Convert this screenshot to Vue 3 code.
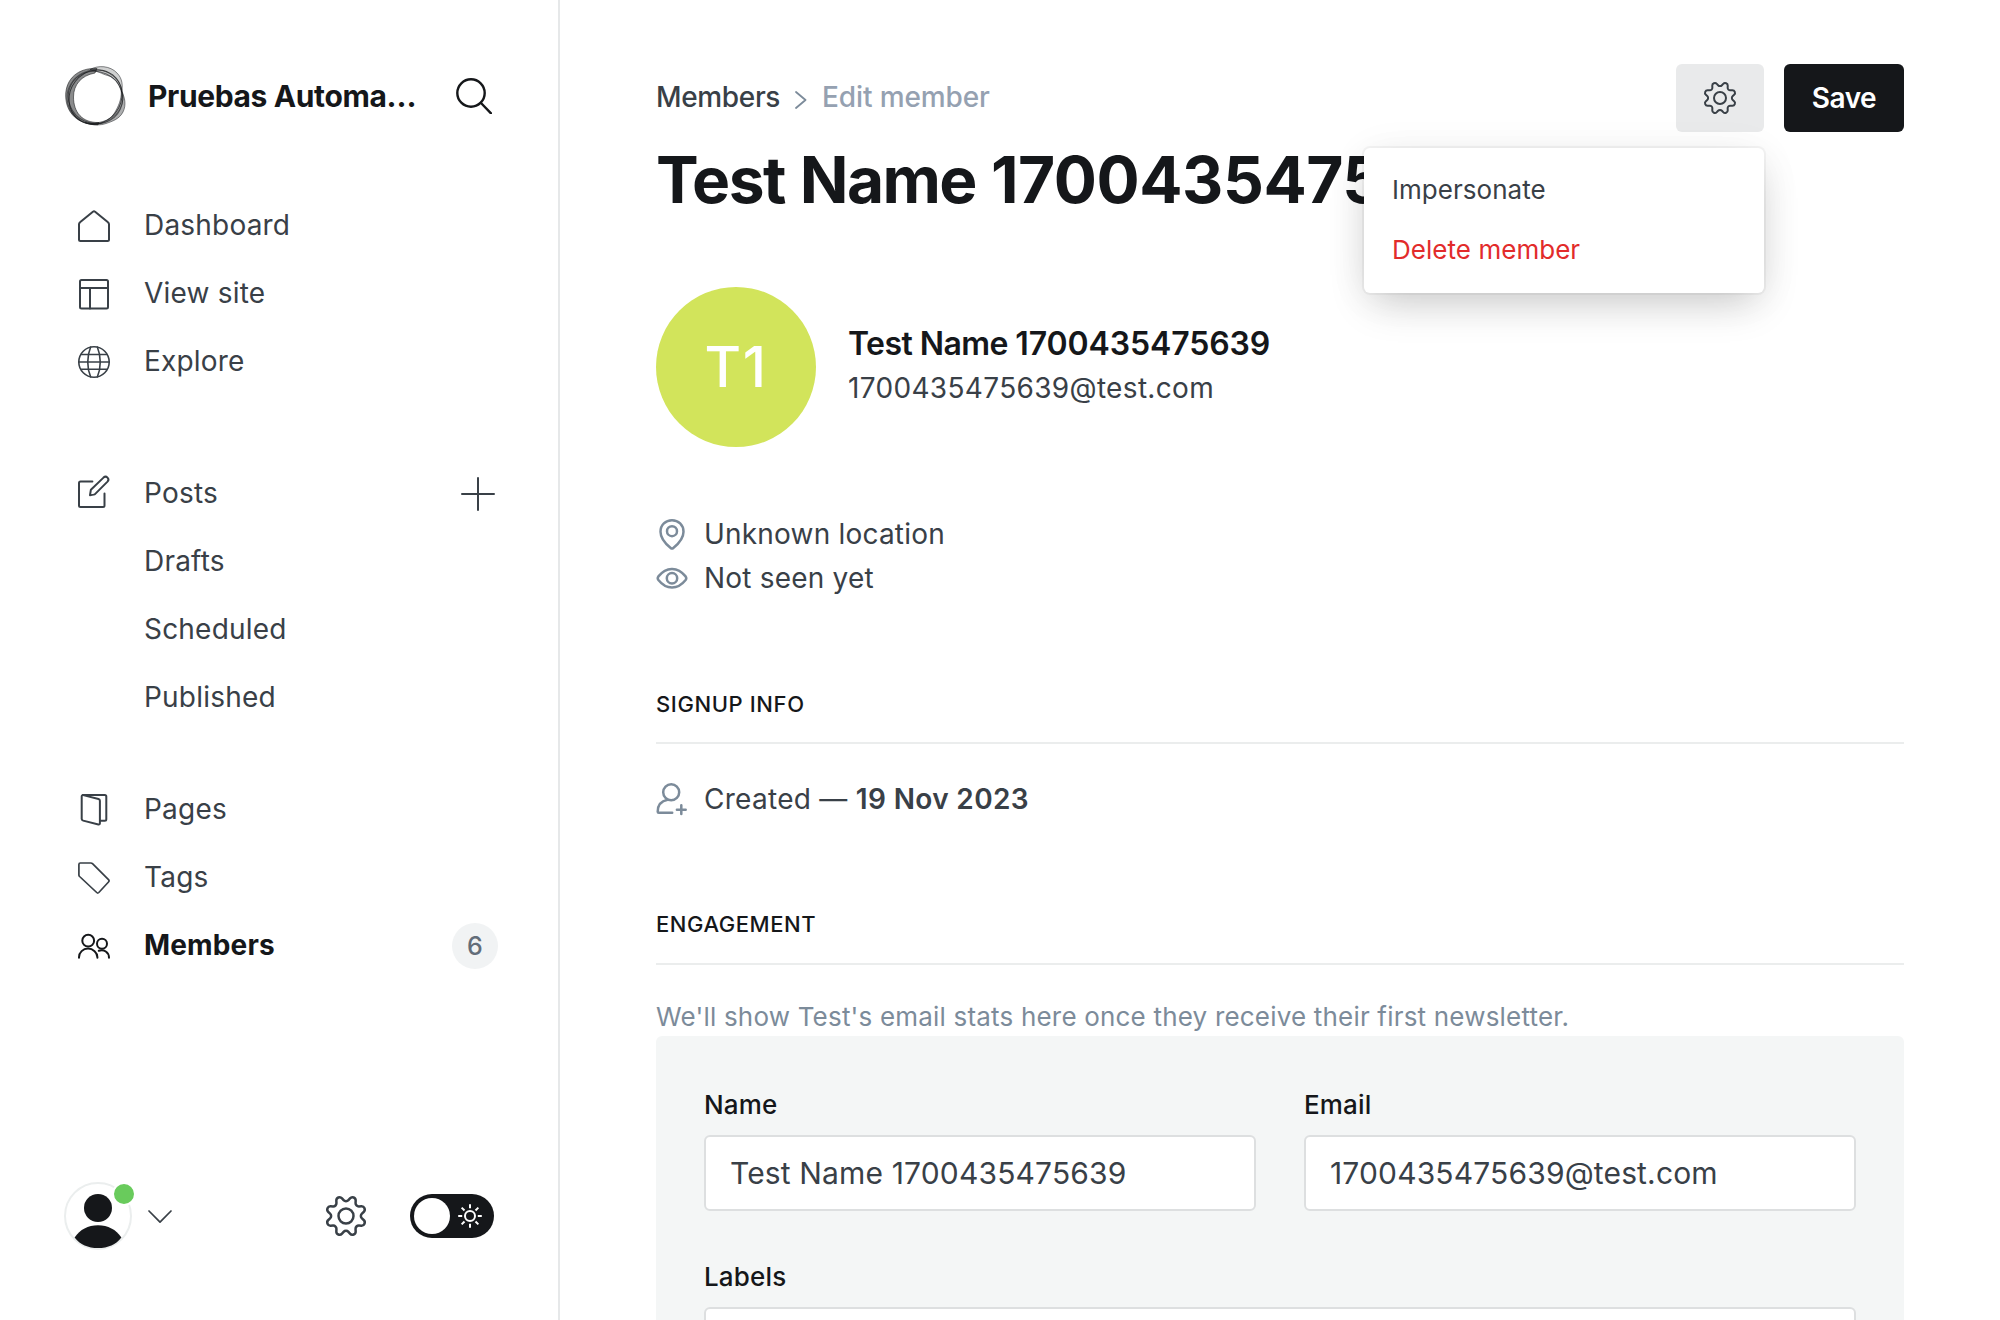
<script setup>
import { ref } from 'vue'

const primary = [
  { label: 'Dashboard', icon: 'house' },
  { label: 'View site', icon: 'layout' },
  { label: 'Explore', icon: 'globe' },
]
const postViews = ['Drafts', 'Scheduled', 'Published']
const name = ref('Test Name 1700435475639')
const email = ref('1700435475639@test.com')
const cog =
  'M10.546 2.438a1.957 1.957 0 0 0 2.908 0L14.4 1.4a1.959 1.959 0 0 1 3.41 1.413l-.071 1.4a1.958 1.958 0 0 0 2.051 2.054l1.4-.071a1.959 1.959 0 0 1 1.41 3.41l-1.042.94a1.96 1.96 0 0 0 0 2.909l1.042.94a1.959 1.959 0 0 1-1.413 3.41l-1.4-.071a1.958 1.958 0 0 0-2.056 2.056l.071 1.4A1.959 1.959 0 0 1 14.4 22.6l-.941-1.041a1.959 1.959 0 0 0-2.908 0L9.606 22.6A1.959 1.959 0 0 1 6.2 21.192l.072-1.4a1.958 1.958 0 0 0-2.056-2.056l-1.4.071A1.958 1.958 0 0 1 1.4 14.4l1.041-.94a1.96 1.96 0 0 0 0-2.909L1.4 9.606A1.958 1.958 0 0 1 2.813 6.2l1.4.071a1.958 1.958 0 0 0 2.056-2.06L6.2 2.81a1.959 1.959 0 0 1 3.406-1.41Z'
const rays = [0, 45, 90, 135, 180, 225, 270, 315]
</script>

<template>
  <div class="app">
    <aside class="sidebar">
      <div class="brand">
        <svg class="logo" viewBox="0 0 64 64" fill="#15171a" stroke="#15171a" stroke-width=".7">
          <path fill-opacity=".5" stroke-opacity=".8" d="M33 4.500C14 3.500 1.500 15 1.700 32 2 49 14 61 34 60.800L35 58.500C18 59 9.500 48 9.500 33 9.500 21 17 11.500 31 9Z" />
          <path fill-opacity=".2" stroke-opacity=".7" d="M26 5.500C34 1 46 1.500 53 9 58.500 14.500 59 22 57.500 28 54.500 18 50 13 43.500 11.500 38 10 34 7 26 5.500Z" />
          <path fill-opacity=".35" stroke-opacity=".7" d="M57.300 27C61 33 62.500 41 59 48 55.500 55 48 57.500 42 59.500 37 61.500 27 61.500 21 58.500 34 60.500 46 57 50.500 49 54.500 42 57.500 36 57.300 27Z" />
          <g fill="none" stroke-width="1">
            <ellipse cx="31.500" cy="33" rx="25.500" ry="28" transform="rotate(38 31.500 33)" stroke-opacity=".75" />
            <ellipse cx="31.500" cy="33.500" rx="26" ry="27.500" transform="rotate(115 31.500 33.500)" stroke-opacity=".6" />
            <ellipse cx="31" cy="33" rx="27" ry="28" transform="rotate(75 31 33)" stroke-opacity=".5" />
          </g>
        </svg>
        <span class="site-name">Pruebas Automa…</span>
        <svg class="search" viewBox="0 0 36 36" fill="none" stroke="#15171a" stroke-width="2.400" stroke-linecap="round">
          <circle cx="15" cy="15" r="13.700" /><path d="m25 25 10 10.400" />
        </svg>
      </div>

      <nav class="nav">
        <ul>
          <li v-for="item in primary" :key="item.label">
            <svg class="icon" viewBox="0 0 32 32">
              <path v-if="item.icon === 'house'" d="M1 14.200c0-.9.4-1.500 1-1.900L14.900 1.700c.7-.5 1.500-.5 2.200 0L30 12.300c.6.400 1 1 1 1.900V29.500c0 .8-.7 1.500-1.500 1.500h-27C1.700 31 1 30.300 1 29.500Z" />
              <g v-else-if="item.icon === 'layout'"><rect x="2" y="2" width="28" height="28.500" rx="1.500" /><path d="M2 10h28M12 10v20.500" /></g>
              <g v-else stroke-width="1.600"><circle cx="16" cy="16" r="15.200" /><path d="M12.600 1.200C8.800 10 8.800 22 12.600 30.800M19.400 1.200c3.800 8.800 3.800 20.800 0 29.600M3 8.500h26M.8 16h30.400M3 23.300h26" /></g>
            </svg>
            <span>{{ item.label }}</span>
          </li>
        </ul>
        <ul class="posts">
          <li>
            <svg class="icon" viewBox="0 0 32 32">
              <path d="M14.400 5.500H2.500C1.700 5.500 1 6.200 1 7v22.500c0 .8.700 1.500 1.500 1.500H25c.8 0 1.500-.700 1.500-1.500V17.500" />
              <path d="m12 19.200.9-5.500L25.500 1.600c1.200-1.100 2.900-1.100 4 0s1.100 2.800 0 4L17 18.100c-.6.600-5 1.100-5 1.100Z" />
            </svg>
            <span>Posts</span>
            <svg class="plus" viewBox="0 0 34 34"><path d="M1 17h32M17 1v32" /></svg>
          </li>
          <li v-for="view in postViews" :key="view"><span class="sub">{{ view }}</span></li>
        </ul>
        <ul>
          <li>
            <svg class="icon" viewBox="0 0 32 32">
              <path d="M5.200 1.100 20.500 5c.9.300 1.400.800 1.400 1.700v22.500c0 1-.6 1.500-1.500 1.300L5.200 26.600C4.300 26.300 3.700 25.800 3.700 25V2.500c0-1 .6-1.600 1.500-1.400Z" />
              <path d="M5 1.100h21.800c.9 0 1.500.6 1.500 1.500v22.600c0 .9-.6 1.500-1.500 1.500h-4.600" />
            </svg>
            <span>Pages</span>
          </li>
          <li>
            <svg class="icon" viewBox="0 0 32 32"><path stroke-width="1.700" d="M2.300 1h10.500c.7 0 1.200.2 1.700.7l16 16c.8.800.8 1.500 0 2.300L20.800 30.500c-.7.700-1.400.700-2.100 0L1.600 14.500C1.100 14 .9 13.500.9 12.900V2.400C.9 1.500 1.400 1 2.300 1Z" /></svg>
            <span>Tags</span>
          </li>
          <li class="active">
            <svg class="icon" viewBox="0 0 32 32">
              <circle cx="10.200" cy="10.700" r="5.900" /><circle cx="24" cy="13.800" r="5" />
              <path d="M1 27.700v-.5C1 22.500 5 18.600 10 18.600s9.400 3.900 9.400 8.600v.5M20.800 20.800c5-2 10.200 1.500 10.200 6.900" />
            </svg>
            <span>Members</span>
            <b class="count">6</b>
          </li>
        </ul>
      </nav>

      <div class="footer">
        <div class="user">
          <svg viewBox="0 0 68 68">
            <circle cx="34" cy="34" r="33" fill="#fff" stroke="#ebeeee" stroke-width="2" />
            <circle cx="34" cy="26" r="14" fill="#15171a" />
            <path d="M10.600 55.400C16 47.500 24 43.200 34 43.200s18 4.300 23.400 12.200C52 62.500 44 66 34 66s-18-3.500-23.400-10.600Z" fill="#15171a" />
          </svg>
          <i class="status"></i>
        </div>
        <svg class="caret" viewBox="0 0 24 14"><path d="m1 1 11 11.200L23 1" /></svg>
        <svg class="settings" viewBox="0 0 24 24"><path :d="cog" /><circle cx="12" cy="12" r="4.500" /></svg>
        <div class="toggle">
          <span class="knob"></span>
          <svg viewBox="-12 -12 24 24" fill="none" stroke="#fff" stroke-width="2">
            <circle r="5" />
            <path v-for="a in rays" :key="a" d="M0-7.800V-11.800" :transform="`rotate(${a})`" />
          </svg>
        </div>
      </div>
    </aside>

    <main class="main">
      <header class="header">
        <div class="crumbs">
          <span class="parent">Members</span>
          <svg viewBox="0 0 12 18"><path d="m1 1 9.500 8L1 17" /></svg>
          <span class="current">Edit member</span>
        </div>
        <div class="actions">
          <div class="menu-anchor">
            <button class="cog-btn"><svg viewBox="0 0 24 24"><path :d="cog" /><circle cx="12" cy="12" r="4.500" /></svg></button>
            <div class="menu">
              <div class="menu-item">Impersonate</div>
              <div class="menu-item danger">Delete member</div>
            </div>
          </div>
          <button class="save">Save</button>
        </div>
      </header>
      <h1>Test Name <span class="digits">1700435475639</span></h1>

      <section class="profile">
        <div class="avatar">T1</div>
        <div class="identity">
          <h2>Test Name <span class="digits">1700435475639</span></h2>
          <p>{{ email }}</p>
        </div>
      </section>

      <section class="meta">
        <div class="row">
          <svg viewBox="0 0 32 32"><path d="M16 2.200c6.400 0 11.500 4.800 11.500 11.500C27.500 20.500 21 27 17.300 30c-.8.700-1.800.7-2.600 0C11 27 4.500 20.500 4.500 13.700 4.500 7 9.600 2.200 16 2.200Z" /><circle cx="16" cy="13.200" r="5" /></svg>
          <span>Unknown location</span>
        </div>
        <div class="row">
          <svg viewBox="0 0 32 32"><path d="M16 6.900c5.700-.1 10.500 3.600 13.600 7.500.9 1.200.9 2.400 0 3.600-3.100 3.900-7.900 7.500-13.600 7.500S5.500 21.900 2.400 18c-.9-1.200-.9-2.400 0-3.600C5.500 10.500 10.300 6.800 16 6.900Z" /><circle cx="16" cy="16.200" r="5.200" /></svg>
          <span>Not seen yet</span>
        </div>
      </section>

      <h4 class="signup">Signup info</h4>
      <div class="row created">
        <svg viewBox="0 0 32 32"><circle cx="15.200" cy="9.300" r="8" /><path d="M11.600 16.800C5.500 18 1.700 22.400 1.700 28.700c0 .7.400 1.100 1.100 1.100h13.400M25.300 22.300v8.800M20.900 26.700h8.800" /></svg>
        <span>Created — <b>19 Nov 2023</b></span>
      </div>

      <h4 class="engagement">Engagement</h4>
      <p class="hint">We'll show Test's email stats here once they receive their first newsletter.</p>

      <form class="panel">
        <div class="field"><label>Name</label><div class="input">{{ name }}</div></div>
        <div class="field"><label>Email</label><div class="input">{{ email }}</div></div>
        <div class="field wide"><label>Labels</label><div class="input"></div></div>
      </form>
    </main>
  </div>
</template>

<style>
body { overflow: hidden; }
</style>

<style scoped>
* { box-sizing: border-box; margin: 0; padding: 0; }
.app { display: flex; height: 1320px; overflow: hidden; background: #fff; color: #394047; font: 400 28px/36px Inter, sans-serif; letter-spacing: .2px; }
.sidebar { display: flex; flex-direction: column; flex: none; width: 560px; padding: 64px 62px 70px 64px; border-right: 2px solid #e6e8e9; }
.brand { display: flex; align-items: center; height: 64px; }
.logo { width: 64px; height: 64px; }
.site-name { flex: none; margin-left: 20px; font-size: 30px; font-weight: 700; letter-spacing: -.37px; color: #15171a; width: 308px; }
.search { flex: none; width: 36px; height: 36px; }
.nav { margin-top: 63px; display: flex; flex-direction: column; }
ul { list-style: none; margin-bottom: 44px; }
ul:first-child { margin-bottom: 64px; }
li { display: flex; align-items: center; height: 68px; padding-left: 14px; }
li span { margin-left: 34px; }
li .sub { margin-left: 66px; }
.icon { width: 32px; height: 32px; margin-top: 1px; fill: none; stroke: #394047; stroke-width: 2; stroke-linecap: round; stroke-linejoin: round; overflow: visible; }
.posts .icon { margin-top: -3px; }
.plus { width: 34px; height: 34px; margin: 1px 1px 0 auto; fill: none; stroke: #394047; stroke-width: 2; stroke-linecap: round; }
.active { color: #15171a; font-weight: 700; letter-spacing: .16px; }
.active .icon { stroke: #15171a; }
.count { display: flex; align-items: center; justify-content: center; width: 46px; height: 46px; margin: 1px -2px 0 auto; border-radius: 50%; background: #f1f3f4; color: #626d79; font-size: 25px; font-weight: 500; }
.footer { display: flex; align-items: center; height: 68px; margin-top: auto; }
.user { position: relative; width: 68px; height: 68px; }
.user svg { display: block; width: 68px; height: 68px; }
.status { position: absolute; top: 0; right: -4px; width: 24px; height: 24px; border: 2px solid #fff; border-radius: 50%; background: #69cb5c; }
.caret { width: 24px; height: 14px; margin: 2px 0 0 16px; fill: none; stroke: #394047; stroke-width: 1.700; stroke-linecap: round; stroke-linejoin: round; }
.settings { width: 40px; height: 40px; margin-left: 154px; fill: none; stroke: #394047; stroke-width: 1.500; overflow: visible; }
.toggle { display: flex; align-items: center; width: 84px; height: 44px; margin-left: 44px; padding-left: 4px; border-radius: 22px; background: #15171a; }
.knob { width: 36px; height: 36px; border-radius: 50%; background: #fff; }
.toggle svg { width: 24px; height: 24px; margin-left: 8px; }

.main { flex: 1; padding: 64px 96px 0; }
.header { display: flex; align-items: center; justify-content: space-between; height: 68px; }
.crumbs { display: flex; align-items: center; margin-top: -2px; font-weight: 500; letter-spacing: -.35px; }
.crumbs svg { width: 12px; height: 18px; margin: 5px 15px 0 15px; fill: none; stroke: #7c8b9a; stroke-width: 1.800; stroke-linecap: round; stroke-linejoin: round; }
.current { color: #95a1b1; letter-spacing: -.12px; }
.actions { display: flex; gap: 20px; }
button { display: flex; align-items: center; justify-content: center; height: 68px; border: 0; border-radius: 6px; font: inherit; }
.cog-btn { width: 88px; background: #e9eaeb; }
.cog-btn svg { width: 32px; height: 32px; fill: none; stroke: #394047; stroke-width: 1.500; overflow: visible; }
.save { width: 120px; background: #15171a; color: #fff; font-weight: 600; letter-spacing: -.5px; }
.menu-anchor { position: relative; }
.menu { position: absolute; top: 84px; right: 0; z-index: 2; width: 400px; height: 145px; padding: 12px 0; border-radius: 6px; background: #fff; box-shadow: 0 0 0 2px rgba(0,0,0,.04), 0 16px 40px -8px rgba(0,0,0,.2), 0 4px 44px rgba(0,0,0,.05); font-size: 26px; letter-spacing: .04px; }
.menu-item { display: flex; align-items: center; height: 60px; padding-left: 28px; }
.danger { color: #e22b2b; }
h1 { margin-top: 12px; font-size: 64px; line-height: 72px; font-weight: 700; letter-spacing: -1.600px; word-spacing: 1.500px; color: #15171a; white-space: nowrap; }
h1 .digits { letter-spacing: -.45px; }

.profile { display: flex; align-items: center; gap: 32px; margin-top: 71px; }
.avatar { display: flex; align-items: center; justify-content: center; width: 160px; height: 160px; border-radius: 50%; background: #d2e45b; color: #fff; font-size: 56px; font-weight: 500; letter-spacing: 1.500px; }
.identity { margin-top: -2px; }
h2 { font-size: 32px; line-height: 44px; font-weight: 600; letter-spacing: -.56px; color: #15171a; }
h2 .digits { letter-spacing: -.12px; }
.profile p { line-height: 44px; letter-spacing: .33px; }
.meta { margin-top: 65px; }
.row { display: flex; align-items: center; height: 44px; }
.row svg { width: 32px; height: 32px; margin-right: 16px; fill: none; stroke: #7c8b9a; stroke-width: 2.500; stroke-linecap: round; stroke-linejoin: round; overflow: visible; }
.row b { font-weight: 600; letter-spacing: .36px; }
.created span { letter-spacing: .28px; }
h4 { border-bottom: 2px solid #ebeded; font-size: 22px; line-height: 28px; font-weight: 500; letter-spacing: .6px; text-transform: uppercase; color: #15171a; }
.signup { height: 54px; margin-top: 90px; }
.created { margin-top: 33px; }
.engagement { height: 55px; margin-top: 89px; letter-spacing: .55px; }
.hint { margin-top: 32px; font-size: 26px; line-height: 40px; letter-spacing: .19px; color: #7c8b9a; }
.panel { display: grid; grid-template-columns: 1fr 1fr; column-gap: 48px; row-gap: 48px; margin-top: -1px; padding: 51px 48px 48px; border-radius: 6px; background: #f4f6f6; }
.wide { grid-column: span 2; }
label { display: block; height: 48px; font-size: 26px; line-height: 36px; font-weight: 500; letter-spacing: .16px; color: #15171a; }
.input { display: flex; align-items: center; height: 76px; padding-left: 24px; border: 2px solid #dddfe0; border-radius: 6px; background: #fff; font-size: 30px; letter-spacing: .15px; }
</style>
